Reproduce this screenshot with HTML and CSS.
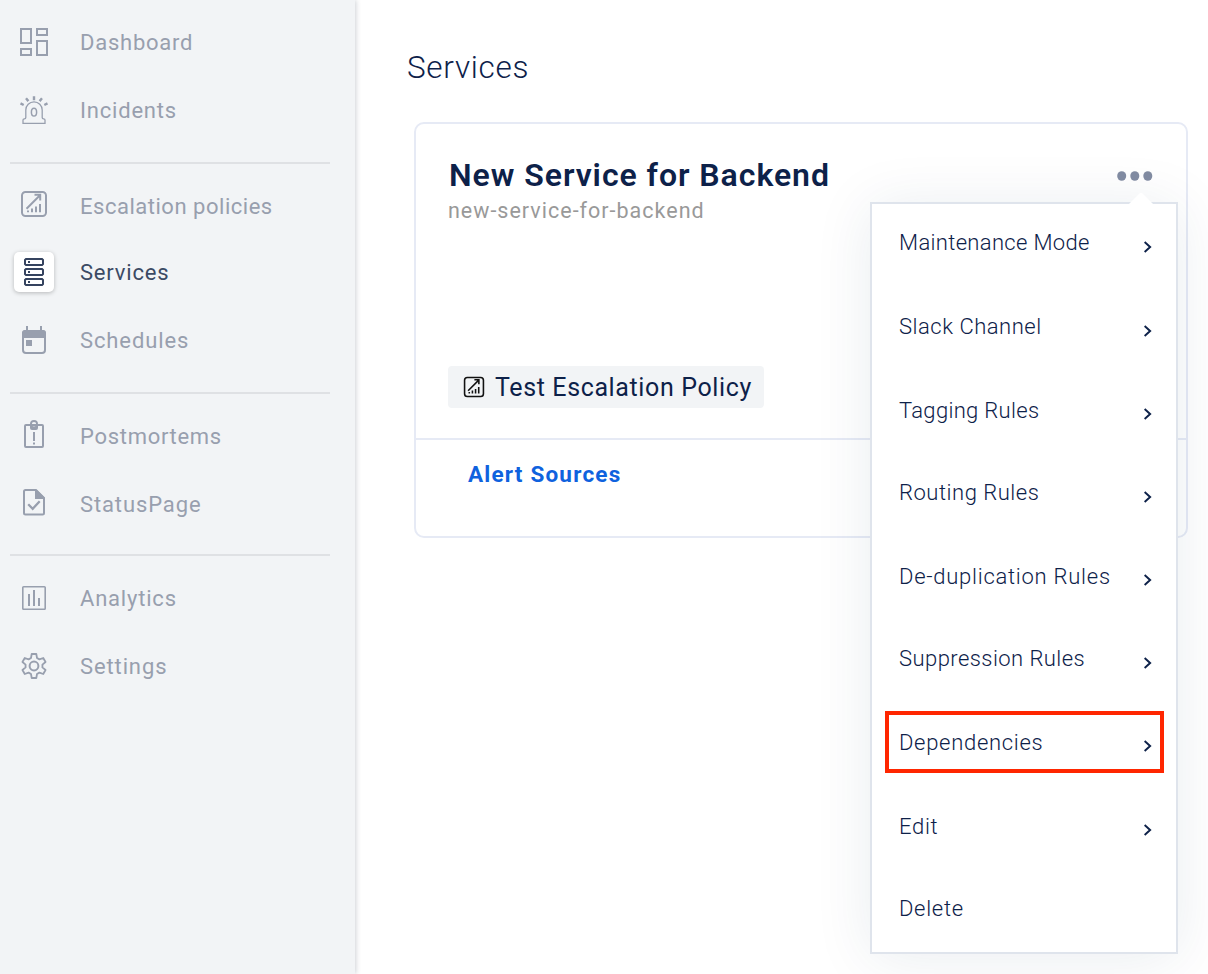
FILE: index.html
```html
<!DOCTYPE html>
<html lang="en">
<head>
<meta charset="utf-8">
<title>Services</title>
<link rel="stylesheet" href="styles.css">
</head>
<body>
<div class="app">
  <nav class="sidebar">
    <a class="item"><svg class="icon" viewBox="0 0 40 40"><path d="M7 7h10v14H7zM23 7h10v6H23zM7 27h10v6H7zM23 19h10v14H23z"/></svg><span class="t-dashboard">Dashboard</span></a>
    <a class="item"><svg class="icon thin" viewBox="0 0 40 40"><path d="M9 33.3v-3.2q0-1.2 1.4-1.2 1.4 0 1.4-1.4V20a8.2 8.2 0 0 1 16.4 0v7.500q0 1.400 1.400 1.400 1.400 0 1.400 1.200v3.200z"/><ellipse cx="20" cy="22.200" rx="2.600" ry="3.900"/><path class="rays" d="M20 6.200v4M12 8.300l2.400 2.800M28 8.300l-2.400 2.800M6.500 13.400l3.200 1.600M33.500 13.400l-3.200 1.600"/></svg><span class="t-incidents">Incidents</span></a>
    <hr>
    <a class="item row-a"><svg class="icon" viewBox="0 0 40 40"><rect x="8" y="6" width="24" height="24" rx="3.500"/><path d="M12.500 22.800L26 9.200M20.500 8.800h5.700v5.700M14 24.500v1.800M18 22.500v3.800M22 20.500v5.800M26 18v8.300"/></svg><span class="t-escalation">Escalation policies</span></a>
    <a class="item row-a active"><svg class="icon" viewBox="0 0 40 40"><path d="M12 7h16l1 1v4l-1 1H12l-1-1V8zM12 17h16l1 1v4l-1 1H12l-1-1v-4zM12 27h16l1 1v4l-1 1H12l-1-1v-4zM14 10h2M14 20h2M14 30h2"/></svg><span class="t-services">Services</span></a>
    <a class="item row-b"><svg class="icon" viewBox="0 0 40 40"><rect x="9" y="11" width="22" height="22" rx="3"/><path class="fill" d="M8 18v-5q0-3 3-3h18q3 0 3 3v5zM12 20h6v6h-6z"/><path d="M13 6v5M27 6v5"/></svg><span class="t-schedules">Schedules</span></a>
    <hr class="after-b">
    <a class="item"><svg class="icon" viewBox="0 0 40 40"><rect x="11" y="9" width="18" height="22" rx="1"/><path class="fill" fill-rule="evenodd" d="M16 8a4 4 0 0 1 8 0v4q0 2-2 2h-4q-2 0-2-2zM20 6a2.200 2.200 0 1 0 0 4.400 2.200 2.200 0 0 0 0-4.400z"/><path d="M20 16v9M20 26.500v2"/></svg><span class="t-postmortems">Postmortems</span></a>
    <a class="item"><svg class="icon" viewBox="0 0 40 40"><path d="M11.500 6H22l8 8v15q0 1.500-1.500 1.500h-17Q10 30.500 10 29V7.500Q10 6 11.500 6z"/><path class="fill" d="M21 6h2l8 8v1H21z"/><path class="check" d="M14.200 20.300l4.500 4.500 7-7.500"/></svg><span class="t-status">StatusPage</span></a>
    <hr class="short">
    <a class="item"><svg class="icon" viewBox="0 0 40 40"><rect class="frame" x="8.800" y="8.800" width="22.400" height="22.400" rx=".8"/><path d="M15 16v12M20 12v16M25 20v8"/></svg><span class="t-analytics">Analytics</span></a>
    <a class="item"><svg class="icon" viewBox="-20 -20 40 40"><path class="gear" d="M-3-8L-2.300-12H2.300L3-8 5.430-6.600 9.240-7.990 11.540-4.010 8.430-1.400V1.400L11.540 4.010 9.240 7.990 5.430 6.600 3 8 2.300 12H-2.300L-3 8-5.430 6.600-9.240 7.990-11.540 4.010-8.430 1.400V-1.400L-11.540-4.010-9.240-7.990-5.430-6.600z"/><circle r="4.400"/></svg><span class="t-settings">Settings</span></a>
  </nav>
  <main class="main">
    <h1>Services</h1>
    <section class="card">
      <div class="card-body">
        <div class="card-head">
          <h2>New Service for Backend</h2>
          <svg class="dots" viewBox="0 0 36 10"><ellipse cx="4.700" cy="5" rx="4.500" ry="4.800"/><ellipse cx="17.800" cy="5" rx="4.500" ry="4.800"/><ellipse cx="30.800" cy="5" rx="4.500" ry="4.800"/></svg>
        </div>
        <p class="slug">new-service-for-backend</p>
        <div class="chip"><svg viewBox="6 4 28 28"><rect x="8" y="6" width="24" height="24" rx="3.500"/><path d="M12.500 22.800L26 9.200M20.500 8.800h5.700v5.700M14 24.500v1.800M18 22.500v3.800M22 20.500v5.800M26 18v8.300"/></svg><span>Test Escalation Policy</span></div>
      </div>
      <div class="card-foot"><a class="sources">Alert Sources</a></div>
      <div class="menu">
        <svg class="caret" viewBox="0 0 24 12"><path d="M0 12L10.500 1.500Q12 0 13.500 1.500L24 12z"/></svg>
        <div class="entry tall"><span class="m1">Maintenance Mode</span><svg class="low" viewBox="0 0 8 12"><path d="M.6 1l5.500 5L.6 11"/></svg></div>
        <div class="entry tall"><span class="m2">Slack Channel</span><svg class="low" viewBox="0 0 8 12"><path d="M.6 1l5.500 5L.6 11"/></svg></div>
        <div class="entry"><span class="m3">Tagging Rules</span><svg viewBox="0 0 8 12"><path d="M.6 1l5.500 5L.6 11"/></svg></div>
        <div class="entry tall"><span class="m4">Routing Rules</span><svg class="low" viewBox="0 0 8 12"><path d="M.6 1l5.500 5L.6 11"/></svg></div>
        <div class="entry"><span class="m5">De-duplication Rules</span><svg viewBox="0 0 8 12"><path d="M.6 1l5.500 5L.6 11"/></svg></div>
        <div class="entry tall"><span class="m6">Suppression Rules</span><svg class="low" viewBox="0 0 8 12"><path d="M.6 1l5.500 5L.6 11"/></svg></div>
        <div class="entry tall marked"><span class="m7">Dependencies</span><svg viewBox="0 0 8 12"><path d="M.6 1l5.500 5L.6 11"/></svg></div>
        <div class="entry"><span class="m8">Edit</span><svg viewBox="0 0 8 12"><path d="M.6 1l5.500 5L.6 11"/></svg></div>
        <div class="entry"><span class="m9">Delete</span></div>
      </div>
    </section>
  </main>
</div>
</body>
</html>
```
FILE: styles.css
```css
*, *::before { box-sizing: border-box; }
body { margin: 0; background: #fff; font-family: Roboto, "Liberation Sans", sans-serif; color: #0d2149; }
h1, h2, p { margin: 0; }
svg { display: block; flex: none; }
span, a, h1, h2, p { white-space: nowrap; }

.app { display: flex; width: 1208px; height: 974px; overflow: hidden; }

.sidebar { flex: none; width: 355px; padding: 8px 25px 0 10px; background: #f2f4f6; box-shadow: 1px 0 5px rgba(30, 45, 70, .22); }
.item { display: flex; align-items: center; gap: 26px; height: 68px; padding-left: 4px; color: #989fae; font-size: 22px; line-height: 26px; letter-spacing: .8px; }
.item span { padding-top: 2px; }
.row-a { height: 66px; }
.row-b { height: 70px; }
.sidebar hr { height: 2px; margin: 18px 0 8px; border: 0; background: #dfe1e4; }
.sidebar hr + .row-a { margin-top: 9px; }
.sidebar hr.after-b { margin-top: 17px; }
.sidebar hr.short { margin-top: 16px; }
.t-dashboard { letter-spacing: .75px; }
.t-postmortems { letter-spacing: .7px; }
.t-escalation { letter-spacing: .52px; }
.t-schedules, .t-status, .t-settings { letter-spacing: .88px; }
.icon { width: 40px; height: 40px; border-radius: 5px; fill: none; stroke: #989fae; stroke-width: 2; }
.icon .fill { fill: #989fae; stroke: none; }
.thin { stroke-width: 1.300; }
.thin ellipse { stroke-width: 1.500; }
.icon .rays { stroke-width: 2.400; }
.check { stroke-width: 2.300; }
.frame { stroke-width: 1.600; }
.gear { stroke-width: 1.800; stroke-linejoin: round; }
.active { color: #3b4a64; }
.active .icon { background: #fff; stroke: #35435f; box-shadow: 0 1px 4px rgba(0, 0, 0, .25); }

.main { flex: 1; padding: 49px 20px 0 59px; }
h1 { margin-left: -7px; height: 73px; font-size: 31.500px; line-height: 38px; font-weight: 300; letter-spacing: .7px; }
.card { position: relative; width: 774px; height: 416px; border: 2px solid #e6eaf5; border-radius: 10px; }
.card-body { height: 314px; padding: 31px 33px 0 32px; }
.card-head { display: flex; justify-content: space-between; align-items: center; height: 42px; }
h2 { padding: 0 0 2px 1px; font-size: 32px; line-height: 40px; font-weight: 600; letter-spacing: .950px; }
.dots { width: 36px; height: 10px; fill: #828ca2; }
.slug { padding-top: 1px; font-size: 21.500px; line-height: 26px; color: #999; letter-spacing: 1px; }
.chip { display: flex; align-items: center; gap: 10px; width: 316px; height: 42px; margin-top: 142px; padding-left: 15px; border-radius: 4px; background: #f2f4f6; font-size: 25px; line-height: 40px; letter-spacing: .62px; }
.chip span { padding-top: 2px; }
.chip svg { width: 22px; height: 24px; fill: none; stroke: #111; stroke-width: 2; }
.card-foot { height: 98px; padding: 20px 52px; border-top: 2px solid #e6eaf5; }
.sources { color: #0f62de; font-size: 22.500px; line-height: 28px; font-weight: 700; letter-spacing: 1.200px; }

.menu { position: absolute; left: 454px; top: 78px; width: 308px; height: 752px; padding-top: 12px; border: 2px solid #dfe4ec; background: #fff; box-shadow: 0 4px 56px rgba(20, 50, 90, .09); }
.caret { position: absolute; right: 23px; top: -12px; width: 24px; height: 12px; fill: #fff; }
.entry { display: flex; justify-content: space-between; align-items: flex-start; height: 82px; padding: 14px 24px 0 27px; font-size: 22px; line-height: 26px; font-weight: 300; letter-spacing: .8px; }
.entry.tall { height: 84px; }
.entry svg { width: 8px; height: 12px; margin-top: 10px; fill: none; stroke: #0d2149; stroke-width: 2; }
.entry .low { margin-top: 11px; }
.m1 { letter-spacing: .34px; }
.m2, .m4 { letter-spacing: .52px; }
.m3 { letter-spacing: .32px; }
.m5 { letter-spacing: .74px; }
.m6 { letter-spacing: .44px; }
.m7, .m8, .m9 { letter-spacing: .7px; }
.marked { position: relative; }
.marked::before { content: ""; position: absolute; left: 13px; top: -5px; width: 279px; height: 62px; border: 4px solid #ff2600; }
```
